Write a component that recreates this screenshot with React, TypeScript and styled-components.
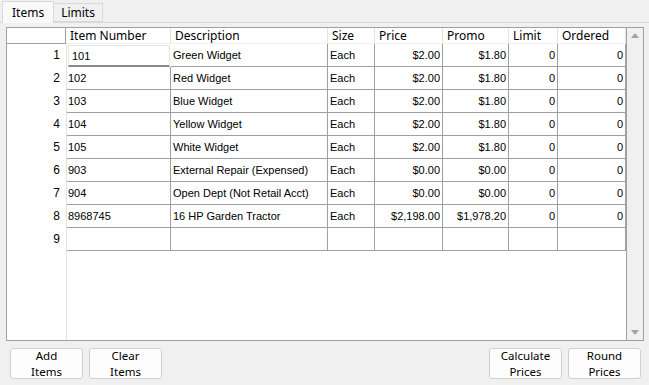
import styled, { createGlobalStyle } from 'styled-components';

const GlobalStyle = createGlobalStyle`
    html, body {
        margin: 0;
        padding: 0;
        background: #f0f0f0;
        font-family: "Segoe UI", "Noto Sans", "Liberation Sans", sans-serif;
        font-size: 12px;
        color: #000;
    }
`;

const Window = styled.div`
    width: 649px;
    height: 385px;
    display: flex;
    flex-direction: column;
    background: #f0f0f0;
    overflow: hidden;
`;

const TabStrip = styled.div`
    display: flex;
    align-items: flex-end;
    height: 23px;
    padding-left: 2px;
    border-bottom: 1px solid #d9d9d9;
    box-sizing: border-box;
`;

const Tab = styled.div<{ $active?: boolean }>`
    box-sizing: border-box;
    height: ${p => (p.$active ? '22px' : '19px')};
    margin-bottom: ${p => (p.$active ? '-1px' : '0')};
    padding: ${p => (p.$active ? '2px 9px 0 9px' : '0 7px 0 7px')};
    border: 1px solid #d9d9d9;
    border-bottom: ${p => (p.$active ? 'none' : '1px solid #d9d9d9')};
    border-left: ${p => (p.$active ? '1px solid #d9d9d9' : 'none')};
    background: ${p => (p.$active ? '#f9f9f9' : '#f0f0f0')};
    font-size: 12px;
`;

const Panel = styled.div`
    flex: 1;
    display: flex;
    flex-direction: column;
    padding: 4px 5px 4px 6px;
    background: #f0f0f0;
`;

const GridBox = styled.div`
    height: 314px;
    display: flex;
    border: 1px solid #a0a0a0;
    background: #fff;
    box-sizing: border-box;
`;

const Sheet = styled.div`
    flex: 1;
    display: grid;
    grid-template-columns: 59px 105px 157px 47px 68px 66px 49px 68px;
    grid-auto-rows: 23px;
    grid-template-rows: 16px;
    align-content: start;
    position: relative;
    font-family: "Liberation Sans", Arial, sans-serif;
    font-size: 11px;
`;

const RowHeaderFill = styled.div`
    position: absolute;
    left: 0;
    top: 16px;
    bottom: 0;
    width: 59px;
    border-right: 1px solid #e3e3e3;
    pointer-events: none;
`;

const Corner = styled.div`
    border-right: 1px solid #a0a0a0;
    border-bottom: 1px solid #a0a0a0;
    background: #fff;
`;

const HeadCell = styled.div`
    padding-left: 4px;
    line-height: 15px;
    border-right: 1px solid #e3e3e3;
    border-bottom: 1px solid #f0f0f0;
    white-space: nowrap;
    overflow: hidden;
    font-family: "Segoe UI", "Noto Sans", sans-serif;
    font-size: 12px;
`;

const RowNum = styled.div`
    text-align: right;
    padding-right: 6px;
    line-height: 22px;
    font-size: 12px;
`;

const Cell = styled.div<{ $right?: boolean; $focus?: boolean }>`
    box-sizing: border-box;
    border-right: 1px solid #a0a0a0;
    border-bottom: 1px solid #a0a0a0;
    padding: ${p => (p.$right ? '0 2px 0 0' : '0 0 0 2px')};
    text-align: ${p => (p.$right ? 'right' : 'left')};
    line-height: 22px;
    white-space: nowrap;
    overflow: hidden;
    ${p => p.$focus && `
        margin: 1px 1px 0 2px;
        padding-left: 3px;
        line-height: 20px;
        border: 1px solid #e6e6e6;
        border-bottom: 2px solid #8a8a8a;
    `}
`;

const ScrollBar = styled.div`
    width: 17px;
    display: flex;
    flex-direction: column;
    justify-content: space-between;
    align-items: center;
    background: #f0f0f0;
    border-left: 1px solid #a0a0a0;
    padding: 5px 0;
    box-sizing: border-box;
`;

const Arrow = styled.div<{ $down?: boolean }>`
    width: 0;
    height: 0;
    border-left: 4px solid transparent;
    border-right: 4px solid transparent;
    ${p => (p.$down ? 'border-top: 5px solid #a3a3a3;' : 'border-bottom: 5px solid #a3a3a3;')}
`;

const ButtonBar = styled.div`
    display: flex;
    gap: 6px;
    padding: 7px 3px 0 4px;
`;

const Spacer = styled.div`
    flex: 1;
`;

const Button = styled.div`
    width: 73px;
    height: 31px;
    box-sizing: border-box;
    display: flex;
    flex-direction: column;
    align-items: center;
    justify-content: center;
    text-align: center;
    line-height: 16px;
    border: 1px solid #d0d0d0;
    border-radius: 3px;
    background: #fdfdfd;
    font-size: 11.5px;
    overflow: visible;
`;

interface Item {
    num: string;
    desc: string;
    size: string;
    price: string;
    promo: string;
    limit: string;
    ordered: string;
}

const items: Item[] = [
    { num: '101', desc: 'Green Widget', size: 'Each', price: '$2.00', promo: '$1.80', limit: '0', ordered: '0' },
    { num: '102', desc: 'Red Widget', size: 'Each', price: '$2.00', promo: '$1.80', limit: '0', ordered: '0' },
    { num: '103', desc: 'Blue Widget', size: 'Each', price: '$2.00', promo: '$1.80', limit: '0', ordered: '0' },
    { num: '104', desc: 'Yellow Widget', size: 'Each', price: '$2.00', promo: '$1.80', limit: '0', ordered: '0' },
    { num: '105', desc: 'White Widget', size: 'Each', price: '$2.00', promo: '$1.80', limit: '0', ordered: '0' },
    { num: '903', desc: 'External Repair (Expensed)', size: 'Each', price: '$0.00', promo: '$0.00', limit: '0', ordered: '0' },
    { num: '904', desc: 'Open Dept (Not Retail Acct)', size: 'Each', price: '$0.00', promo: '$0.00', limit: '0', ordered: '0' },
    { num: '8968745', desc: '16 HP Garden Tractor', size: 'Each', price: '$2,198.00', promo: '$1,978.20', limit: '0', ordered: '0' },
    { num: '', desc: '', size: '', price: '', promo: '', limit: '', ordered: '' },
];

const headers = ['Item Number', 'Description', 'Size', 'Price', 'Promo', 'Limit', 'Ordered'];

const App = () => {
    return (
        <Window>
            <GlobalStyle />
            <TabStrip>
                <Tab $active>Items</Tab>
                <Tab>Limits</Tab>
            </TabStrip>
            <Panel>
                <GridBox>
                    <Sheet>
                        <RowHeaderFill />
                        <Corner />
                        {headers.map(h => (
                            <HeadCell key={h}>{h}</HeadCell>
                        ))}
                        {items.map((it, i) => (
                            <>
                                <RowNum key={`n${i}`}>{i + 1}</RowNum>
                                <Cell key={`a${i}`} $focus={i === 0}>{it.num}</Cell>
                                <Cell key={`b${i}`}>{it.desc}</Cell>
                                <Cell key={`c${i}`}>{it.size}</Cell>
                                <Cell key={`d${i}`} $right>{it.price}</Cell>
                                <Cell key={`e${i}`} $right>{it.promo}</Cell>
                                <Cell key={`f${i}`} $right>{it.limit}</Cell>
                                <Cell key={`g${i}`} $right>{it.ordered}</Cell>
                            </>
                        ))}
                    </Sheet>
                    <ScrollBar>
                        <Arrow />
                        <Arrow $down />
                    </ScrollBar>
                </GridBox>
                <ButtonBar>
                    <Button><span>Add</span><span>Items</span></Button>
                    <Button><span>Clear</span><span>Items</span></Button>
                    <Spacer />
                    <Button><span>Calculate</span><span>Prices</span></Button>
                    <Button><span>Round</span><span>Prices</span></Button>
                </ButtonBar>
            </Panel>
        </Window>
    );
};

export default App;
